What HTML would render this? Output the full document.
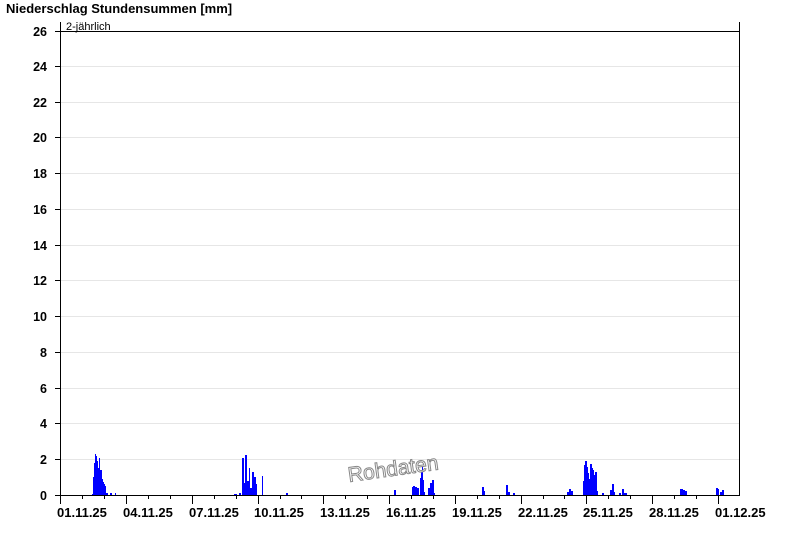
<!DOCTYPE html>
<html><head><meta charset="utf-8"><style>
html,body{margin:0;padding:0;background:#fff;width:800px;height:550px;overflow:hidden}
svg{display:block}
text{font-family:"Liberation Sans",Arial,sans-serif}
</style></head><body>
<svg width="800" height="550" viewBox="0 0 800 550" xmlns="http://www.w3.org/2000/svg">
<text x="6" y="13" font-size="13" font-weight="bold">Niederschlag Stundensummen [mm]</text>
<g stroke="#e6e6e6" stroke-width="1">
<line x1="60" x2="740" y1="66.5" y2="66.5"/><line x1="60" x2="740" y1="102.5" y2="102.5"/>
<line x1="60" x2="740" y1="137.5" y2="137.5"/><line x1="60" x2="740" y1="173.5" y2="173.5"/>
<line x1="60" x2="740" y1="209.5" y2="209.5"/><line x1="60" x2="740" y1="245.5" y2="245.5"/>
<line x1="60" x2="740" y1="280.5" y2="280.5"/><line x1="60" x2="740" y1="316.5" y2="316.5"/>
<line x1="60" x2="740" y1="352.5" y2="352.5"/><line x1="60" x2="740" y1="388.5" y2="388.5"/>
<line x1="60" x2="740" y1="423.5" y2="423.5"/><line x1="60" x2="740" y1="459.5" y2="459.5"/>
</g>
<g fill="#0000ff">
<rect x="92" y="494" width="1" height="1"/>
<rect x="93" y="477" width="1" height="18"/><rect x="94" y="463" width="1" height="32"/>
<rect x="95" y="454" width="1" height="41"/><rect x="96" y="456" width="1" height="39"/>
<rect x="97" y="461" width="1" height="34"/><rect x="98" y="468" width="1" height="27"/>
<rect x="99" y="458" width="1" height="37"/><rect x="100" y="470" width="1" height="25"/>
<rect x="101" y="470" width="1" height="25"/><rect x="102" y="479" width="1" height="16"/>
<rect x="103" y="482" width="1" height="13"/><rect x="104" y="484" width="1" height="11"/>
<rect x="105" y="486" width="1" height="9"/><rect x="106" y="493" width="2" height="2"/>
<rect x="110" y="493" width="2" height="2"/><rect x="115" y="493" width="1" height="2"/>
<rect x="234" y="494" width="3" height="1"/><rect x="239" y="493" width="2" height="2"/>
<rect x="242" y="458" width="2" height="37"/><rect x="244" y="483" width="1" height="12"/>
<rect x="245" y="455" width="2" height="40"/><rect x="247" y="481" width="2" height="14"/>
<rect x="249" y="468" width="1" height="27"/><rect x="250" y="488" width="2" height="7"/>
<rect x="252" y="472" width="2" height="23"/><rect x="254" y="477" width="2" height="18"/>
<rect x="256" y="484" width="1" height="11"/><rect x="262" y="476" width="1" height="19"/>
<rect x="286" y="493" width="2" height="2"/>
<rect x="394" y="490" width="2" height="5"/>
<rect x="412" y="487" width="1" height="8"/><rect x="413" y="486" width="2" height="9"/>
<rect x="415" y="487" width="2" height="8"/><rect x="417" y="488" width="2" height="7"/>
<rect x="420" y="478" width="1" height="17"/><rect x="421" y="472" width="1" height="23"/>
<rect x="422" y="467" width="1" height="28"/><rect x="423" y="480" width="1" height="15"/>
<rect x="424" y="492" width="1" height="3"/>
<rect x="428" y="488" width="2" height="7"/><rect x="430" y="483" width="2" height="12"/>
<rect x="432" y="480" width="2" height="15"/><rect x="434" y="493" width="1" height="2"/>
<rect x="482" y="487" width="2" height="8"/><rect x="484" y="491" width="1" height="4"/>
<rect x="506" y="485" width="2" height="10"/><rect x="508" y="492" width="2" height="3"/>
<rect x="513" y="493" width="2" height="2"/>
<rect x="567" y="492" width="2" height="3"/><rect x="569" y="489" width="2" height="6"/>
<rect x="571" y="491" width="2" height="4"/>
<rect x="583" y="481" width="1" height="14"/><rect x="584" y="465" width="1" height="30"/>
<rect x="585" y="461" width="2" height="34"/><rect x="587" y="467" width="1" height="28"/>
<rect x="588" y="473" width="1" height="22"/><rect x="589" y="479" width="1" height="16"/>
<rect x="590" y="464" width="2" height="31"/><rect x="592" y="468" width="1" height="27"/>
<rect x="593" y="470" width="1" height="25"/><rect x="594" y="475" width="1" height="20"/>
<rect x="595" y="472" width="2" height="23"/><rect x="597" y="491" width="1" height="4"/>
<rect x="602" y="493" width="2" height="2"/>
<rect x="610" y="490" width="2" height="5"/><rect x="612" y="484" width="2" height="11"/>
<rect x="614" y="492" width="1" height="3"/>
<rect x="619" y="493" width="2" height="2"/><rect x="622" y="489" width="2" height="6"/>
<rect x="624" y="493" width="3" height="2"/>
<rect x="680" y="489" width="3" height="6"/><rect x="683" y="490" width="2" height="5"/>
<rect x="685" y="491" width="2" height="4"/>
<rect x="716" y="488" width="2" height="7"/><rect x="718" y="489" width="1" height="6"/>
<rect x="720" y="492" width="2" height="3"/><rect x="722" y="490" width="2" height="5"/>
</g>
<g stroke="#000" stroke-width="1" fill="none">
<line x1="60.5" y1="22" x2="60.5" y2="495"/>
<line x1="739.5" y1="22" x2="739.5" y2="495"/>
<line x1="60" y1="31.5" x2="740" y2="31.5"/>
<line x1="55" y1="495.5" x2="740" y2="495.5"/>
<line x1="55" x2="60" y1="31.5" y2="31.5"/><line x1="55" x2="60" y1="66.5" y2="66.5"/>
<line x1="55" x2="60" y1="102.5" y2="102.5"/><line x1="55" x2="60" y1="137.5" y2="137.5"/>
<line x1="55" x2="60" y1="173.5" y2="173.5"/><line x1="55" x2="60" y1="209.5" y2="209.5"/>
<line x1="55" x2="60" y1="245.5" y2="245.5"/><line x1="55" x2="60" y1="280.5" y2="280.5"/>
<line x1="55" x2="60" y1="316.5" y2="316.5"/><line x1="55" x2="60" y1="352.5" y2="352.5"/>
<line x1="55" x2="60" y1="388.5" y2="388.5"/><line x1="55" x2="60" y1="423.5" y2="423.5"/>
<line x1="55" x2="60" y1="459.5" y2="459.5"/>
<path d="M60.5 495v9M126.5 495v9M192.5 495v9M258.5 495v9M323.5 495v9M389.5 495v9M455.5 495v9M521.5 495v9M586.5 495v9M652.5 495v9M718.5 495v9"/>
<path d="M82.5 495v4M104.5 495v4M148.5 495v4M170.5 495v4M214.5 495v4M236.5 495v4M280.5 495v4M301.5 495v4M345.5 495v4M367.5 495v4M411.5 495v4M433.5 495v4M477.5 495v4M499.5 495v4M543.5 495v4M564.5 495v4M608.5 495v4M630.5 495v4M674.5 495v4M696.5 495v4"/>
</g>
<g font-size="12.5" font-weight="bold" text-anchor="end">
<text x="47" y="36">26</text><text x="47" y="71">24</text><text x="47" y="107">22</text>
<text x="47" y="142">20</text><text x="47" y="178">18</text><text x="47" y="214">16</text>
<text x="47" y="250">14</text><text x="47" y="285">12</text><text x="47" y="321">10</text>
<text x="47" y="357">8</text><text x="47" y="393">6</text><text x="47" y="428">4</text>
<text x="47" y="464">2</text><text x="47" y="500">0</text>
</g>
<text x="66" y="30" font-size="11">2-jährlich</text>
<g font-size="13" font-weight="bold">
<text x="57" y="517">01.11.25</text><text x="123" y="517">04.11.25</text>
<text x="189" y="517">07.11.25</text><text x="254" y="517">10.11.25</text>
<text x="320" y="517">13.11.25</text><text x="386" y="517">16.11.25</text>
<text x="452" y="517">19.11.25</text><text x="518" y="517">22.11.25</text>
<text x="583" y="517">25.11.25</text><text x="649" y="517">28.11.25</text>
<text x="715" y="517">01.12.25</text>
</g>
<text x="349" y="482" font-size="21" fill="#fff" stroke="#888" stroke-width="1" transform="rotate(-8 349 482)">Rohdaten</text>
</svg>
</body></html>
